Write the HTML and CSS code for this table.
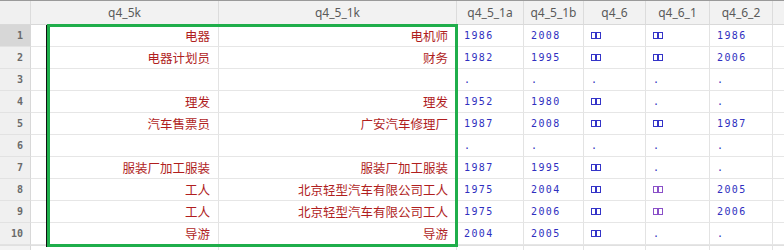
FILE: index.html
```html
<!DOCTYPE html>
<html lang="zh">
<head>
<meta charset="utf-8">
<title>Data editor</title>
<link rel="stylesheet" href="styles.css">
</head>
<body>
<div class="grid">
  <div class="row head">
    <div class="c rn"></div>
    <div class="c">q4_5k</div>
    <div class="c">q4_5_1k</div>
    <div class="c">q4_5_1a</div>
    <div class="c">q4_5_1b</div>
    <div class="c">q4_6</div>
    <div class="c">q4_6_1</div>
    <div class="c">q4_6_2</div>
    <div class="c"></div>
  </div>

  <div class="row">
    <div class="c rn cur">1</div>
    <div class="c s">电器</div><div class="c s">电机师</div>
    <div class="c n">1986</div><div class="c n">2008</div>
    <div class="c n"><span class="tofu"><i></i><i></i></span></div>
    <div class="c n"><span class="tofu"><i></i><i></i></span></div>
    <div class="c n">1986</div><div class="c"></div>
  </div>
  <div class="row">
    <div class="c rn">2</div>
    <div class="c s">电器计划员</div><div class="c s">财务</div>
    <div class="c n">1982</div><div class="c n">1995</div>
    <div class="c n"><span class="tofu"><i></i><i></i></span></div>
    <div class="c n"><span class="tofu"><i></i><i></i></span></div>
    <div class="c n">2006</div><div class="c"></div>
  </div>
  <div class="row">
    <div class="c rn">3</div>
    <div class="c s"></div><div class="c s"></div>
    <div class="c n">.</div><div class="c n">.</div><div class="c n">.</div><div class="c n">.</div><div class="c n">.</div><div class="c"></div>
  </div>
  <div class="row">
    <div class="c rn">4</div>
    <div class="c s">理发</div><div class="c s">理发</div>
    <div class="c n">1952</div><div class="c n">1980</div>
    <div class="c n"><span class="tofu"><i></i><i></i></span></div>
    <div class="c n">.</div><div class="c n">.</div><div class="c"></div>
  </div>
  <div class="row">
    <div class="c rn">5</div>
    <div class="c s">汽车售票员</div><div class="c s">广安汽车修理厂</div>
    <div class="c n">1987</div><div class="c n">2008</div>
    <div class="c n"><span class="tofu"><i></i><i></i></span></div>
    <div class="c n"><span class="tofu"><i></i><i></i></span></div>
    <div class="c n">1987</div><div class="c"></div>
  </div>
  <div class="row">
    <div class="c rn">6</div>
    <div class="c s"></div><div class="c s"></div>
    <div class="c n">.</div><div class="c n">.</div><div class="c n">.</div><div class="c n">.</div><div class="c n">.</div><div class="c"></div>
  </div>
  <div class="row">
    <div class="c rn">7</div>
    <div class="c s">服装厂加工服装</div><div class="c s">服装厂加工服装</div>
    <div class="c n">1987</div><div class="c n">1995</div>
    <div class="c n"><span class="tofu"><i></i><i></i></span></div>
    <div class="c n">.</div><div class="c n">.</div><div class="c"></div>
  </div>
  <div class="row">
    <div class="c rn">8</div>
    <div class="c s">工人</div><div class="c s">北京轻型汽车有限公司工人</div>
    <div class="c n">1975</div><div class="c n">2004</div>
    <div class="c n"><span class="tofu"><i></i><i></i></span></div>
    <div class="c n"><span class="tofu alt"><i></i><i></i></span></div>
    <div class="c n">2005</div><div class="c"></div>
  </div>
  <div class="row">
    <div class="c rn">9</div>
    <div class="c s">工人</div><div class="c s">北京轻型汽车有限公司工人</div>
    <div class="c n">1975</div><div class="c n">2006</div>
    <div class="c n"><span class="tofu"><i></i><i></i></span></div>
    <div class="c n"><span class="tofu alt"><i></i><i></i></span></div>
    <div class="c n">2006</div><div class="c"></div>
  </div>
  <div class="row">
    <div class="c rn">10</div>
    <div class="c s">导游</div><div class="c s">导游</div>
    <div class="c n">2004</div><div class="c n">2005</div>
    <div class="c n"><span class="tofu"><i></i><i></i></span></div>
    <div class="c n">.</div><div class="c n">.</div><div class="c"></div>
  </div>
  <div class="row empty">
    <div class="c rn"></div>
    <div class="c"></div><div class="c"></div><div class="c"></div><div class="c"></div><div class="c"></div><div class="c"></div><div class="c"></div><div class="c"></div>
  </div>

  <div class="mark"></div>
  <div class="sel"></div>
</div>
</body>
</html>
```
FILE: styles.css
```css
html, body {
  margin: 0;
  padding: 0;
  background: #ffffff;
  overflow: hidden;
}

.grid {
  position: relative;
  width: 784px;
  height: 250px;
  overflow: hidden;
  border-top: 1px solid #9a9a9a;
  box-sizing: border-box;
  font-family: "Noto Sans", "Noto Sans CJK SC", sans-serif;
}

.row {
  display: grid;
  grid-template-columns: 31px 188px 238px 67px 60px 62px 64px 63px 40px;
  height: 22px;
}

.c {
  box-sizing: border-box;
  border-right: 1px solid #e3e3e3;
  border-bottom: 1px solid #e6e6e6;
  line-height: 21px;
  white-space: nowrap;
  overflow: hidden;
}

.head {
  height: 24px;
  background: #f2f2f2;
}

.head .c {
  line-height: 23px;
  font-size: 12px;
  color: #5a5a5a;
  text-align: center;
  border-right-color: #dcdcdc;
  border-bottom-color: #d9d9d9;
}

.rn {
  background: #f0f0f0;
  border-right-color: #d8d8d8;
  border-bottom-color: #e2e2e2;
  text-align: right;
  padding-right: 7px;
  font-family: "DejaVu Sans Mono", monospace;
  font-weight: bold;
  font-size: 10px;
  color: #6a6a6a;
}

.rn.cur {
  background: #d7d7d7;
}

.s {
  text-align: right;
  padding-right: 8px;
  font-family: "Noto Sans CJK SC", sans-serif;
  font-size: 12.5px;
  color: #b01e1e;
}

.n {
  padding-left: 7px;
  font-family: "DejaVu Sans Mono", monospace;
  font-size: 10px;
  letter-spacing: 1.4px;
  color: #2f2fc0;
}

.tofu {
  display: inline-flex;
  vertical-align: middle;
  margin-top: -2px;
}

.tofu i {
  display: block;
  width: 3px;
  height: 5px;
  border: 1px solid #3434c8;
}

.tofu.alt i {
  border-color: #8a50c8;
}

.empty .c {
  border-top: 1px solid #e0e0e0;
}

.empty .rn {
  background: #f3f3f3;
}

.mark {
  position: absolute;
  left: 46px;
  top: 24px;
  width: 1px;
  height: 222px;
  background: #111111;
}

.sel {
  position: absolute;
  left: 47px;
  top: 23px;
  width: 411px;
  height: 223px;
  border: 3px solid #1fae4b;
  box-sizing: border-box;
}
```
